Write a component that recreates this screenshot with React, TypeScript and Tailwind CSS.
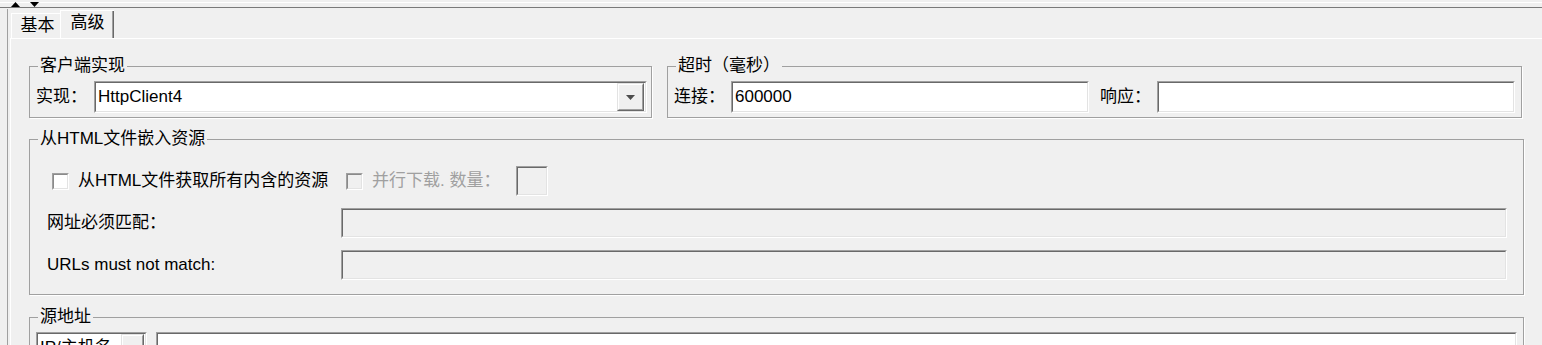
import React from 'react';

const FONT = "font-['Liberation_Sans','Noto_Sans_CJK_SC',sans-serif]";

function Sunken({ className = '', disabled = false, children }: { className?: string; disabled?: boolean; children?: React.ReactNode }) {
  return (
    <div className={`border border-t-[#a0a0a0] border-l-[#a0a0a0] border-r-white border-b-white ${className}`}>
      <div
        className={`h-full flex items-center border border-t-[#696969] border-l-[#696969] border-r-[#e3e3e3] border-b-[#e3e3e3] ${
          disabled ? 'bg-[#f0f0f0]' : 'bg-white'
        }`}
      >
        {children}
      </div>
    </div>
  );
}

function ArrowButton({ className = '' }: { className?: string }) {
  return (
    <div className={`h-full border border-t-[#e3e3e3] border-l-[#e3e3e3] border-r-[#696969] border-b-[#696969] ${className}`}>
      <div className="h-full flex items-center justify-center bg-[#f0f0f0] border border-t-white border-l-white border-r-[#a0a0a0] border-b-[#a0a0a0]">
        <svg width="9" height="5" viewBox="0 0 9 5">
          <polygon points="0,0 9,0 4.5,5" fill="#4d4d4d" />
        </svg>
      </div>
    </div>
  );
}

function Group({ title, className = '', children }: { title: string; className?: string; children?: React.ReactNode }) {
  return (
    <fieldset className={`border border-[#a0a0a0] shadow-[1px_1px_0_#fff] min-w-0 ${className}`}>
      <legend className="ml-[8px] px-[2px] leading-[20px]">{title}</legend>
      {children}
    </fieldset>
  );
}

function CheckBox({ disabled = false }: { disabled?: boolean }) {
  return (
    <div className="w-[17px] h-[17px] shrink-0 border border-t-[#a0a0a0] border-l-[#a0a0a0] border-r-white border-b-white">
      <div
        className={`h-full border border-t-[#8a8a8a] border-l-[#8a8a8a] border-r-[#e3e3e3] border-b-[#e3e3e3] ${
          disabled ? 'bg-[#f0f0f0]' : 'bg-white'
        }`}
      />
    </div>
  );
}

export default function App() {
  return (
    <div className={`w-[1542px] h-[345px] overflow-hidden bg-[#f0f0f0] text-[17px] text-black ${FONT}`}>
      {/* split pane divider */}
      <div className="relative h-[9px]">
        <div className="h-[2px]" />
        <div className="h-px bg-white" />
        <div className="h-[4px]" />
        <div className="h-px bg-[#7a7a7a]" />
        <div className="absolute left-[11px] top-[2px] flex gap-[10px]">
          <svg className="block" width="9" height="5" viewBox="0 0 9 5">
            <polygon points="4.5,0 9,5 0,5" fill="#000" />
          </svg>
          <svg className="block" width="9" height="5" viewBox="0 0 9 5">
            <polygon points="0,0 9,0 4.5,5" fill="#000" />
          </svg>
        </div>
      </div>

      <div className="ml-[7px] h-[336px] border-l border-[#a0a0a0] pl-[2px]">
        {/* tabs */}
        <div className="flex items-end h-[29px] pl-[1px]">
          <div className="w-[49px] h-[25px] border-t border-l border-white flex items-center justify-center pl-[3px]">
            基本
          </div>
          <div className="w-[54px] h-[28px] border-t border-l border-white flex">
            <div className="flex-1 flex items-center justify-center pb-[3px] pl-[2px] border-r border-[#a0a0a0]">高级</div>
            <div className="w-px bg-[#696969]" />
          </div>
        </div>

        {/* tab content */}
        <div className="h-full border-t border-l border-white pl-[18px]">
          <div className="flex gap-[15px] mt-[17px]">
            <Group title="客户端实现" className="w-[623px]">
              <div className="flex items-center pt-[5px] pb-[4px] pl-[6px] pr-[4px]">
                <span className="w-[58px] shrink-0">实现：</span>
                <Sunken className="flex-1 h-[32px]">
                  <span className="pl-[2px]">HttpClient4</span>
                  <ArrowButton className="ml-auto mr-px w-[27px]" />
                </Sunken>
              </div>
            </Group>

            <Group title="超时（毫秒）" className="w-[855px]">
              <div className="flex items-center pt-[5px] pb-[4px] pl-[6px]">
                <span className="w-[57px] shrink-0">连接：</span>
                <Sunken className="w-[358px] h-[32px]">
                  <span className="pl-[2px]">600000</span>
                </Sunken>
                <span className="w-[57px] shrink-0 pl-[11px] box-content">响应：</span>
                <Sunken className="w-[358px] h-[32px]" />
              </div>
            </Group>
          </div>

          <Group title="从HTML文件嵌入资源" className="w-[1495px] mt-[11px]">
            <div className="flex flex-col gap-[12px] pt-[17px] pb-[14px] pl-[17px] pr-[16px]">
              <div className="flex items-center h-[30px]">
                <div className="ml-[5px]">
                  <CheckBox />
                </div>
                <span className="ml-[9px] w-[245px] shrink-0 whitespace-nowrap">从HTML文件获取所有内含的资源</span>
                <div className="ml-[23px]">
                  <CheckBox disabled />
                </div>
                <span className="ml-[9px] w-[144px] shrink-0 whitespace-nowrap text-[#a0a0a0]">并行下载. 数量：</span>
                <Sunken disabled className="w-[32px] h-[30px]" />
              </div>
              <div className="flex items-center">
                <span className="w-[294px] shrink-0">网址必须匹配：</span>
                <Sunken disabled className="flex-1 h-[30px]" />
              </div>
              <div className="flex items-center">
                <span className="w-[294px] shrink-0">URLs must not match:</span>
                <Sunken disabled className="flex-1 h-[30px]" />
              </div>
            </div>
          </Group>

          <Group title="源地址" className="w-[1495px] mt-[12px]">
            <div className="flex items-start pt-[5px] pl-[6px] pr-[6px]">
              <Sunken className="w-[111px] h-[32px]">
                <span className="pl-[2px] whitespace-nowrap">IP/主机名</span>
                <ArrowButton className="ml-auto mr-px w-[23px]" />
              </Sunken>
              <Sunken className="flex-1 ml-[9px] h-[32px]" />
            </div>
          </Group>
        </div>
      </div>
    </div>
  );
}
